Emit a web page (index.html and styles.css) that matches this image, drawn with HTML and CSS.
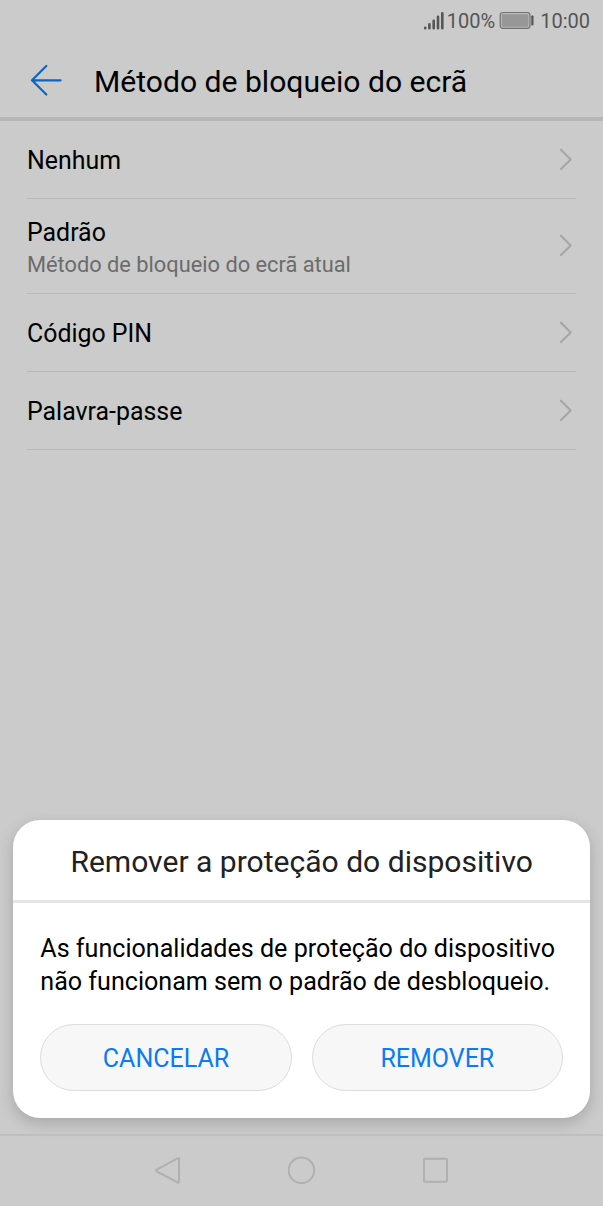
FILE: index.html
```html
<!DOCTYPE html>
<html lang="pt">
<head>
<meta charset="utf-8">
<title>Método de bloqueio do ecrã</title>
<link rel="stylesheet" href="styles.css">
</head>
<body>
<div class="screen">
  <div class="status">
    <svg class="signal" width="22" height="20" viewBox="0 0 22 20">
      <g stroke="#555" stroke-width="2.6" stroke-linecap="round"><path d="M2.2 16.800v.4M6.4 13.400v3.8M10.7 9.800v7.400M15 5.900v11.300M19.300 2.400v14.800"/></g>
    </svg>
    <span class="percent">100%</span>
    <svg class="battery" width="36" height="20" viewBox="0 0 36 20">
      <rect x="1.200" y="1.500" width="29.800" height="15.800" rx="2.500" fill="#b8b8b8" stroke="#737373" stroke-width="1.200"/>
      <rect x="2.900" y="3.300" width="26.400" height="12.400" rx="1" fill="#979797"/>
      <rect x="32.300" y="4.500" width="2.200" height="10" rx=".8" fill="#555"/>
    </svg>
    <span class="clock">10:00</span>
  </div>
  <header class="header">
    <svg class="back" width="32" height="32" viewBox="0 0 32 32" fill="none" stroke="#0b65c4" stroke-width="2.200" stroke-linecap="round" stroke-linejoin="round"><path d="M30.600 16.300H2M16.300 2L2 16.300l14.300 14.200"/></svg>
    <h1 class="title">Método de bloqueio do ecrã</h1>
  </header>
  <main class="list">
    <div class="row">
      <div class="label">Nenhum</div>
      <svg class="chevron" viewBox="0 0 14 24"><path d="M2 1.700L11.700 11.500 2 21.100"/></svg>
    </div>
    <div class="row tall">
      <div><div class="label">Padrão</div><div class="sub">Método de bloqueio do ecrã atual</div></div>
      <svg class="chevron" viewBox="0 0 14 24"><path d="M2 1.700L11.700 11.500 2 21.100"/></svg>
    </div>
    <div class="row">
      <div class="label">Código PIN</div>
      <svg class="chevron" viewBox="0 0 14 24"><path d="M2 1.700L11.700 11.500 2 21.100"/></svg>
    </div>
    <div class="row">
      <div class="label">Palavra-passe</div>
      <svg class="chevron" viewBox="0 0 14 24"><path d="M2 1.700L11.700 11.500 2 21.100"/></svg>
    </div>
  </main>
  <section class="dialog">
    <h2 class="dialog-title">Remover a proteção do dispositivo</h2>
    <p class="message">As funcionalidades de proteção do dispositivo<br>não funcionam sem o padrão de desbloqueio.</p>
    <div class="actions">
      <button class="button">CANCELAR</button>
      <button class="button">REMOVER</button>
    </div>
  </section>
  <nav class="nav">
    <svg width="28" height="30" viewBox="0 0 28 30"><path d="M23.900 2.200Q25 1.700 25 3V25.700Q25 27.100 23.900 26.500L2.600 15.300Q1.300 14.400 2.600 13.600Z"/></svg>
    <svg width="28" height="30" viewBox="0 0 28 30"><circle cx="13.400" cy="14.300" r="12.800"/></svg>
    <svg width="28" height="30" viewBox="0 0 28 30"><rect x="2" y="2.800" width="23" height="23" rx="1"/></svg>
  </nav>
</div>
</body>
</html>
```
FILE: styles.css
```css
* { box-sizing: border-box; }
body { margin: 0; background: #cbcbcb; font-family: Roboto, "Noto Sans", sans-serif; color: #000; }
.screen { width: 603px; height: 1206px; display: flex; flex-direction: column; overflow: hidden; }
.status { height: 41px; flex: none; display: flex; align-items: center; justify-content: flex-end; padding-right: 13px; font-size: 20px; color: #555; }
.percent { margin-left: 2px; }
.battery { margin-left: 4px; }
.clock { margin-left: 5px; }
.header { height: 80px; flex: none; display: flex; align-items: center; padding-left: 30px; border-bottom: 4px solid #b7b7b7; }
.back { margin-bottom: -1px; }
.title { margin: 6px 0 0 32px; font-size: 30.1px; line-height: 40px; font-weight: 400; white-space: nowrap; }
.list { flex: none; padding: 0 27px; }
.row { height: 78px; display: flex; align-items: center; justify-content: space-between; border-bottom: 1px solid #b8b8b8; }
.tall { height: 95px; }
.label { padding-top: 2px; font-size: 24.9px; line-height: 34px; white-space: nowrap; }
.sub { margin-bottom: -1px; font-size: 21.8px; line-height: 30px; color: #6b6b6b; white-space: nowrap; }
.chevron { width: 14px; height: 24px; margin-right: 3px; fill: none; stroke: #a6a6a6; stroke-width: 2.1; stroke-linecap: round; stroke-linejoin: round; }
.dialog { height: 298px; flex: none; margin: auto 13px 16.5px 13.3px; background: #fff; border-radius: 27px; box-shadow: 0 5px 15px rgba(0, 0, 0, .18); }
.dialog-title { margin: 0; height: 83px; border-bottom: 3px solid #e5e5e5; font-size: 30.05px; line-height: 83px; font-weight: 400; text-align: center; color: #212121; white-space: nowrap; }
.message { margin: 29px 27px 0; font-size: 25.1px; line-height: 33px; white-space: nowrap; }
.actions { display: flex; gap: 20px; padding: 26.5px 27px 0; }
.button { flex: 1; height: 67px; padding: 2px 0 0; border: 1px solid #dcdcdc; border-radius: 34px; background: #f7f7f7; font: 25px Roboto, sans-serif; color: #0a7bf0; }
.nav { height: 72px; flex: none; display: flex; justify-content: center; gap: 106px; padding-top: 20px; border-top: 2px solid #bfbfbf; }
.nav svg { fill: none; stroke: #b0b0b0; stroke-width: 2; }
```
